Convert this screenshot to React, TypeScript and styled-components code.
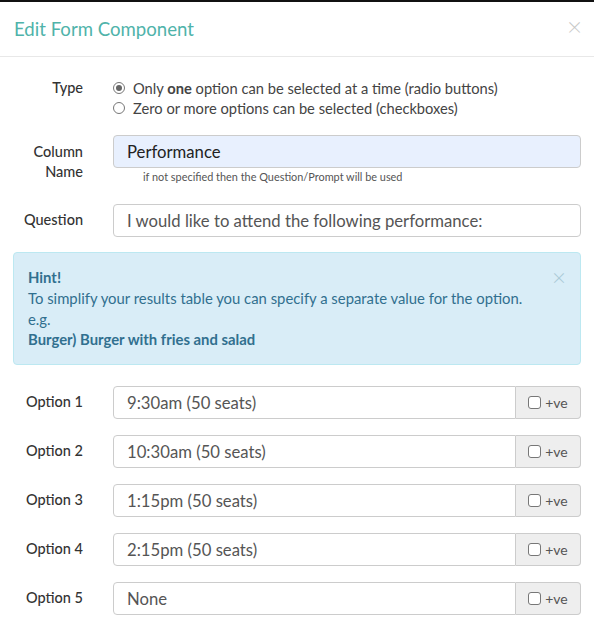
import styled, { createGlobalStyle } from "styled-components";

const GlobalStyle = createGlobalStyle`
  html, body {
    margin: 0;
    padding: 0;
    background: #fff;
  }
  body {
    font-family: Lato, "Noto Sans", "Liberation Sans", sans-serif;
    color: #333;
  }
  * { box-sizing: border-box; }
`;

const Modal = styled.div`
  width: 594px;
  background: #fff;
  border-top: 2px solid #111;
`;

const Header = styled.div`
  display: flex;
  align-items: flex-start;
  justify-content: space-between;
  height: 55px;
  padding: 0 12px 0 14px;
  border-bottom: 1px solid #e8e8e8;
`;

const Title = styled.h4`
  margin: 16px 0 0;
  font-size: 18.6px;
  font-weight: 400;
  color: #4fb3aa;
`;

const CloseX = styled.span<{ $color?: string; $size?: number; $mt?: number }>`
  display: block;
  font-size: ${({ $size }) => $size ?? 26}px;
  font-weight: 300;
  line-height: 1;
  color: ${({ $color }) => $color ?? "#c8c8c8"};
  margin-top: ${({ $mt }) => $mt ?? 0}px;
  cursor: pointer;
`;

const Body = styled.div`
  padding: 21px 13px 0;
  display: flex;
  flex-direction: column;
`;

const Row = styled.div<{ $mb: number }>`
  display: grid;
  grid-template-columns: 70px 1fr;
  column-gap: 30px;
  margin-bottom: ${({ $mb }) => $mb}px;
`;

const Label = styled.div<{ $pt: number }>`
  text-align: right;
  font-size: 14.5px;
  line-height: 20px;
  font-weight: 500;
  color: #333;
  padding-top: ${({ $pt }) => $pt}px;
`;

const RadioList = styled.div`
  display: flex;
  flex-direction: column;
`;

const RadioLine = styled.label`
  display: flex;
  align-items: center;
  gap: 8px;
  font-size: 14.7px;
  line-height: 20px;
  color: #444;
`;

const RadioDot = styled.span<{ $on?: boolean }>`
  width: 12px;
  height: 12px;
  border-radius: 50%;
  border: 1px solid #777;
  display: inline-flex;
  align-items: center;
  justify-content: center;
  &::after {
    content: "";
    width: 6px;
    height: 6px;
    border-radius: 50%;
    background: ${({ $on }) => ($on ? "#666" : "transparent")};
  }
`;

const Field = styled.div`
  display: flex;
  flex-direction: column;
`;

const InputGroup = styled.div`
  display: flex;
  height: 33px;
`;

const TextInput = styled.div<{ $filled?: boolean; $joined?: boolean }>`
  flex: 1;
  display: flex;
  align-items: center;
  padding: 0 13px;
  font-size: 16.7px;
  color: ${({ $filled }) => ($filled ? "#222" : "#555")};
  background: ${({ $filled }) => ($filled ? "#e8f0fe" : "#fff")};
  border: 1px solid #ccc;
  border-radius: ${({ $joined }) => ($joined ? "4px 0 0 4px" : "4px")};
`;

const Addon = styled.div`
  width: 65px;
  display: flex;
  align-items: center;
  justify-content: center;
  gap: 4px;
  background: #eee;
  border: 1px solid #ccc;
  border-left: none;
  border-radius: 0 4px 4px 0;
  font-size: 14px;
  color: #555;
`;

const Check = styled.span`
  width: 13px;
  height: 13px;
  border: 1px solid #777;
  border-radius: 3px;
  background: #fff;
`;

const Help = styled.div`
  font-size: 10.9px;
  color: #555;
  padding-left: 30px;
  margin-top: 2px;
`;

const Alert = styled.div`
  position: relative;
  background: #d9edf7;
  border: 1px solid #bce8f1;
  border-radius: 4px;
  padding: 14px;
  color: #31708f;
  font-size: 14.85px;
  line-height: 20.8px;
  margin-bottom: 21px;
`;

const AlertClose = styled.div`
  position: absolute;
  top: 12px;
  right: 14px;
`;

const Strong = styled.strong`
  font-weight: 700;
`;

const options = [
  "9:30am (50 seats)",
  "10:30am (50 seats)",
  "1:15pm (50 seats)",
  "2:15pm (50 seats)",
  "None",
];

export default function App() {
  return (
    <>
      <GlobalStyle />
      <Modal>
        <Header>
          <Title>Edit Form Component</Title>
          <CloseX $mt={11}>×</CloseX>
        </Header>
        <Body>
          <Row $mb={17}>
            <Label $pt={0}>Type</Label>
            <RadioList>
              <RadioLine>
                <RadioDot $on />
                <span>
                  Only <Strong>one</Strong> option can be selected at a time (radio buttons)
                </span>
              </RadioLine>
              <RadioLine>
                <RadioDot />
                <span>Zero or more options can be selected (checkboxes)</span>
              </RadioLine>
            </RadioList>
          </Row>
          <Row $mb={21}>
            <Label $pt={7}>
              Column
              <br />
              Name
            </Label>
            <Field>
              <InputGroup>
                <TextInput $filled>Performance</TextInput>
              </InputGroup>
              <Help>if not specified then the Question/Prompt will be used</Help>
            </Field>
          </Row>
          <Row $mb={15}>
            <Label $pt={6}>Question</Label>
            <InputGroup>
              <TextInput>I would like to attend the following performance:</TextInput>
            </InputGroup>
          </Row>
          <Alert>
            <AlertClose>
              <CloseX $color="#a9c9d6" $size={24}>×</CloseX>
            </AlertClose>
            <Strong>Hint!</Strong>
            <div>To simplify your results table you can specify a separate value for the option.</div>
            <div>e.g.</div>
            <Strong>Burger) Burger with fries and salad</Strong>
          </Alert>
          {options.map((o, i) => (
            <Row key={i} $mb={16}>
              <Label $pt={6}>Option {i + 1}</Label>
              <InputGroup>
                <TextInput $joined>{o}</TextInput>
                <Addon>
                  <Check />
                  +ve
                </Addon>
              </InputGroup>
            </Row>
          ))}
        </Body>
      </Modal>
    </>
  );
}
